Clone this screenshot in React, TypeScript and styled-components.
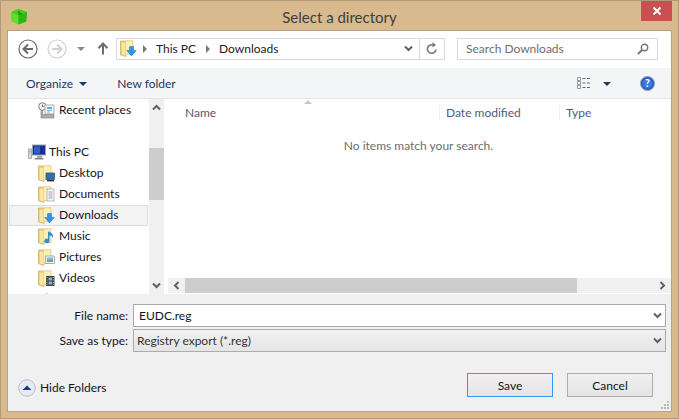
import React from 'react';
import styled, { createGlobalStyle } from 'styled-components';

const GlobalStyle = createGlobalStyle`
  html, body {
    margin: 0;
    padding: 0;
    background: #d9b98e;
  }
  * {
    box-sizing: border-box;
  }
`;

const FONT = `Lato, "Noto Sans", sans-serif`;

type FolderBadge = 'desktop' | 'documents' | 'downloads' | 'music' | 'pictures' | 'videos';

const FolderIcon: React.FC<{ badge: FolderBadge }> = ({ badge }) => (
  <svg width="17" height="17" viewBox="0 0 17 17">
    <path d="M.5 1h4.500l1 1.500V16.500L.5 14.800z" fill="#f0d47c" stroke="#c9a95a" strokeWidth="0.7" />
    <path d="M5.500 .8h7.500V14.500H5.500z" fill="#fbf0b8" stroke="#d8c27a" strokeWidth="0.7" />
    <path d="M2 3h3.500v12.500L2 14.500z" fill="#f7e6a4" />
    {badge === 'desktop' && (
      <>
        <rect x="8" y="8" width="8.500" height="6.500" fill="#2b6fb5" stroke="#3b4a5a" strokeWidth="0.7" />
        <rect x="9" y="15" width="7" height="1.400" fill="#333" />
      </>
    )}
    {badge === 'documents' && (
      <>
        <rect x="9" y="3" width="7" height="12" fill="#f6f7f9" stroke="#9aa3ad" strokeWidth="0.7" />
        <path d="M10.500 6h4M10.500 8h4M10.500 10h4M10.500 12h4" stroke="#8b96a3" strokeWidth="0.8" />
      </>
    )}
    {badge === 'downloads' && (
      <path d="M9.500 6.500h4v4h2.800l-4.800 5.500-4.800-5.500h2.800z" fill="#2f94e4" stroke="#1f79c4" strokeWidth="0.5" />
    )}
    {badge === 'music' && (
      <path d="M11.500 3.500v9.500a2.600 2.300 0 1 1-1.500-2.100V3.500zM11.500 4c2.500 1 4 3 3.500 6-.7-1.700-2-2.600-3.500-2.800z" fill="#2a8fd0" />
    )}
    {badge === 'pictures' && (
      <>
        <rect x="7.500" y="7" width="9" height="7.500" fill="#eef2f3" stroke="#8d979c" strokeWidth="0.7" />
        <rect x="9" y="8.500" width="6" height="2.500" fill="#7db7df" />
        <rect x="9" y="11" width="6" height="2" fill="#7da36a" />
      </>
    )}
    {badge === 'videos' && (
      <>
        <rect x="8" y="6" width="8.500" height="10" fill="#38414a" />
        <rect x="10.500" y="7.500" width="3.500" height="3" fill="#8fb0c8" />
        <rect x="10.500" y="11.500" width="3.500" height="3" fill="#8fb0c8" />
        <path d="M9 7v1M9 9.500v1M9 12v1M9 14v1M15.300 7v1M15.300 9.500v1M15.300 12v1M15.300 14v1" stroke="#e5e5e5" strokeWidth="0.9" />
      </>
    )}
  </svg>
);

const RecentIcon = () => (
  <svg width="17" height="17" viewBox="0 0 17 17">
    <circle cx="4.500" cy="4.500" r="3.800" fill="#f1f1f1" stroke="#7e7e7e" />
    <path d="M4.500 2.500v2.200h2" stroke="#555" fill="none" strokeWidth="0.8" />
    <rect x="7" y="3" width="9" height="9" fill="#f4f6f7" stroke="#9a9fa3" strokeWidth="0.8" />
    <rect x="9" y="5" width="5" height="2" fill="#5ea9dd" />
    <path d="M9 8.500h5M9 10h3" stroke="#7fb7d8" />
    <path d="M3 8.500h1.500v4H16V16H3z" fill="#a8adae" stroke="#7a7f80" strokeWidth="0.6" />
  </svg>
);

const ComputerIcon = () => (
  <svg width="18" height="17" viewBox="0 0 18 17">
    <rect x="0.500" y="5" width="3" height="9.500" fill="#d4dbd7" stroke="#8b9290" strokeWidth="0.7" />
    <rect x="1.300" y="7" width="1.400" height="1.400" fill="#65c04c" />
    <rect x="4.500" y="1" width="13" height="10" fill="#1b2f8f" stroke="#9aa1a8" />
    <rect x="6" y="2.500" width="6" height="7" fill="#2d5fd0" />
    <path d="M9.500 11.500h4l1 2.500h-6z" fill="#a3a9ae" />
    <rect x="6.500" y="14" width="9" height="1.500" fill="#848a8f" />
  </svg>
);

const NavCircle: React.FC<{ $off?: boolean; direction: 'left' | 'right' }> = ({ $off, direction }) => {
  const color = $off ? '#d0d0d0' : '#6a6a6a';
  return (
    <svg width="20" height="20" viewBox="0 0 20 20">
      <circle cx="10" cy="10" r="9" fill="#fff" stroke={color} strokeWidth="1.200" />
      <path
        d={direction === 'left' ? 'M15 10H6M10 5.500 5.500 10l4.500 4.500' : 'M5 10h9M10 5.500l4.500 4.500-4.500 4.500'}
        fill="none"
        stroke={color}
        strokeWidth="2"
      />
    </svg>
  );
};

const Chevron: React.FC<{ direction: 'up' | 'down' | 'left' | 'right' }> = ({ direction }) => {
  const paths = {
    up: 'M1 6.500 4.500 3 8 6.500',
    down: 'M1 2.500 4.500 6 8 2.500',
    left: 'M6.500 1 3 4.500 6.500 8',
    right: 'M2.500 1 6 4.500 2.500 8',
  };
  return (
    <svg width="9" height="9" viewBox="0 0 9 9">
      <path d={paths[direction]} fill="none" stroke="#606060" strokeWidth="2" />
    </svg>
  );
};

const Caret: React.FC<{ color?: string }> = ({ color = '#1c3a66' }) => (
  <svg width="8" height="4" viewBox="0 0 8 4">
    <path d="M0 0h8L4 4z" fill={color} />
  </svg>
);

const treeItems: { label: string; badge: FolderBadge; selected?: boolean }[] = [
  { label: 'Desktop', badge: 'desktop' },
  { label: 'Documents', badge: 'documents' },
  { label: 'Downloads', badge: 'downloads', selected: true },
  { label: 'Music', badge: 'music' },
  { label: 'Pictures', badge: 'pictures' },
  { label: 'Videos', badge: 'videos' },
];

const App: React.FC = () => (
  <Window>
    <GlobalStyle />
    <TitleBar>
      <AppIcon width="18" height="17" viewBox="0 0 18 17">
        <path d="M1 4 9 .8 17 4l-.8 9.500L8.500 16.500 1.800 13z" fill="#3fce1c" />
        <path d="M1 4l7.500 3.500v9L1.800 13z" fill="#5fe02a" />
        <path d="M8.500 7.500 17 4l-.8 9.500-7.700 3z" fill="#2fb516" />
        <path d="M9 3v3.500l3-1" stroke="#176b0c" strokeWidth="0.9" fill="none" />
      </AppIcon>
      <Title>Select a directory</Title>
      <CloseButton>
        <svg width="10" height="10" viewBox="0 0 10 10">
          <path d="M1.500 1.500l7 7M8.500 1.500l-7 7" stroke="#fff" strokeWidth="2" />
        </svg>
      </CloseButton>
    </TitleBar>

    <Client>
      <NavBar>
        <NavCircle direction="left" />
        <ForwardSlot>
          <NavCircle direction="right" $off />
        </ForwardSlot>
        <HistoryCaret>
          <Caret color="#8a8a8a" />
        </HistoryCaret>
        <UpButton>
          <svg width="12" height="13" viewBox="0 0 12 13">
            <path d="M6 12.500V2M1.500 6.300 6 1.500l4.500 4.800" fill="none" stroke="#6c6c6c" strokeWidth="2" />
          </svg>
        </UpButton>
        <AddressBar>
          <AddressIcon>
            <FolderIcon badge="downloads" />
          </AddressIcon>
          <Crumb />
          <CrumbLabel>This PC</CrumbLabel>
          <Crumb />
          <CrumbLabel>Downloads</CrumbLabel>
          <AddressDrop>
            <Chevron direction="down" />
          </AddressDrop>
          <RefreshButton>
            <svg width="12" height="13" viewBox="0 0 12 13">
              <path d="M10 7.500a4.300 4.300 0 1 1-3-4.600" fill="none" stroke="#777" strokeWidth="1.600" />
              <path d="M6.500 0v5.500L10 3z" fill="#777" />
            </svg>
          </RefreshButton>
        </AddressBar>
        <SearchBox>
          <SearchLabel>Search Downloads</SearchLabel>
          <svg width="12" height="12" viewBox="0 0 12 12">
            <circle cx="7.500" cy="4.500" r="3.200" fill="none" stroke="#777" strokeWidth="1.400" />
            <path d="M5 7 1 11" stroke="#777" strokeWidth="2" />
          </svg>
        </SearchBox>
      </NavBar>

      <Toolbar>
        <ToolText>Organize</ToolText>
        <OrganizeCaret>
          <Caret />
        </OrganizeCaret>
        <ToolText>New folder</ToolText>
        <ToolSpacer />
        <svg width="16" height="12" viewBox="0 0 16 12">
          <path d="M.5.500h3v3h-3zM.5 4.500h3v3h-3zM.5 8.500h3v3h-3z" fill="#fff" stroke="#76808c" strokeWidth="0.8" />
          <path d="M5.500 1.500h3M10 1.500h3M5.500 6h3M10 6h3M5.500 10.500h3M10 10.500h3" stroke="#5f6a78" />
        </svg>
        <ViewCaret>
          <Caret />
        </ViewCaret>
        <svg width="15" height="15" viewBox="0 0 15 15">
          <circle cx="7.500" cy="7.500" r="7" fill="#2a5cc0" stroke="#8f9fbf" />
          <circle cx="7.500" cy="7.500" r="5" fill="#3b78dc" />
          <text x="7.500" y="11.300" textAnchor="middle" fontSize="10.500" fontWeight="700" fill="#fff" fontFamily={FONT}>
            ?
          </text>
        </svg>
      </Toolbar>

      <Main>
        <Sidebar>
          <Tree>
            <TreeRow $indent={29}>
              <RecentIcon />
              <TreeLabel>Recent places</TreeLabel>
            </TreeRow>
            <TreeGap />
            <TreeRow $indent={19}>
              <ComputerIcon />
              <TreeRootLabel>This PC</TreeRootLabel>
            </TreeRow>
            {treeItems.map((item) => (
              <TreeRow key={item.label} $indent={29} $selected={item.selected}>
                <FolderIcon badge={item.badge} />
                <TreeLabel>{item.label}</TreeLabel>
              </TreeRow>
            ))}
            <TreeRow $indent={30}>
              <svg width="17" height="17" viewBox="0 0 17 17">
                <path d="M1 3.500 4 3v3H1zM5 3l4-.6V6H5zM1 7h3v3H1zM5 7h4v3.600L5 10z" fill="#19b4ea" />
              </svg>
            </TreeRow>
          </Tree>
          <VScroll>
            <ScrollButton>
              <Chevron direction="up" />
            </ScrollButton>
            <VThumb />
            <VTrack />
            <ScrollButton>
              <Chevron direction="down" />
            </ScrollButton>
          </VScroll>
        </Sidebar>

        <ListPane>
          <ColumnHeader>
            <SortMark />
            <NameColumn>Name</NameColumn>
            <DateColumn>Date modified</DateColumn>
            <TypeColumn>Type</TypeColumn>
          </ColumnHeader>
          <EmptyMessage>No items match your search.</EmptyMessage>
          <HScroll>
            <HButton>
              <Chevron direction="left" />
            </HButton>
            <HThumb />
            <HTrack />
            <HButton>
              <Chevron direction="right" />
            </HButton>
          </HScroll>
        </ListPane>
      </Main>

      <Footer>
        <Form>
          <FieldLabel>File name:</FieldLabel>
          <FileInput>
            <span>EUDC.reg</span>
            <Chevron direction="down" />
          </FileInput>
          <FieldLabel>Save as type:</FieldLabel>
          <TypeSelect>
            <span>Registry export (*.reg)</span>
            <Chevron direction="down" />
          </TypeSelect>
        </Form>
        <Actions>
          <HideFolders>
            <svg width="18" height="18" viewBox="0 0 18 18">
              <circle cx="9" cy="9" r="8.300" fill="#e6ebf3" stroke="#b5bfcc" />
              <path d="M4.500 11 9 6.500l4.500 4.500z" fill="#1d3d75" />
            </svg>
            <span>Hide Folders</span>
          </HideFolders>
          <ActionSpacer />
          <DialogButton $primary>Save</DialogButton>
          <DialogButton>Cancel</DialogButton>
        </Actions>
        <Grip width="10" height="10" viewBox="0 0 10 10">
          <path d="M7 1h2v2H7zM4 4h2v2H4zM7 4h2v2H7zM1 7h2v2H1zM4 7h2v2H4zM7 7h2v2H7z" fill="#b9b9b9" />
        </Grip>
      </Footer>
    </Client>
  </Window>
);

const Window = styled.div`
  position: relative;
  width: 679px;
  height: 419px;
  display: flex;
  flex-direction: column;
  overflow: hidden;
  background: #d9b98e;
  border: 1px solid #b09a7c;
  font-family: ${FONT};
  font-size: 12px;
  color: #1a1a1a;
`;

const TitleBar = styled.div`
  height: 30px;
  flex: none;
  display: flex;
  align-items: center;
  justify-content: center;
`;

const AppIcon = styled.svg`
  position: absolute;
  left: 9px;
  top: 7px;
`;

const Title = styled.div`
  font-size: 15px;
  color: #3f3f3f;
  margin-top: 1px;
`;

const CloseButton = styled.div`
  position: absolute;
  top: 0;
  right: 6px;
  width: 31px;
  height: 20px;
  display: flex;
  align-items: center;
  justify-content: center;
  background: #c75050;
`;

const Client = styled.div`
  position: relative;
  flex: 1;
  margin: 0 7px 7px 7px;
  display: flex;
  flex-direction: column;
  background: #f0f0f0;
  outline: 1px solid #b8a283;
`;

const NavBar = styled.div`
  height: 37px;
  flex: none;
  display: flex;
  align-items: center;
  padding: 0 13px 2px 10px;
  background: #fff;
`;

const ForwardSlot = styled.div`
  display: flex;
  margin-left: 9px;
`;

const HistoryCaret = styled.div`
  display: flex;
  margin-left: 10px;
`;

const UpButton = styled.div`
  display: flex;
  margin-left: 12px;
`;

const AddressBar = styled.div`
  width: 329px;
  height: 22px;
  display: flex;
  align-items: center;
  border: 1px solid #d9d9d9;
  padding-left: 3px;
  margin-left: 7px;
`;

const AddressIcon = styled.div`
  display: flex;
  margin-right: 6px;
`;

const Crumb = styled.div`
  width: 0;
  height: 0;
  border-left: 4px solid #777;
  border-top: 4px solid transparent;
  border-bottom: 4px solid transparent;
  margin-right: 9px;
`;

const CrumbLabel = styled.span`
  margin-right: 10px;
  color: #222;
`;

const AddressDrop = styled.div`
  display: flex;
  margin-left: auto;
  padding: 0 6px;
`;

const RefreshButton = styled.div`
  width: 25px;
  height: 100%;
  display: flex;
  align-items: center;
  justify-content: center;
  border-left: 1px solid #d9d9d9;
`;

const SearchBox = styled.div`
  width: 201px;
  height: 22px;
  margin-left: 12px;
  display: flex;
  align-items: center;
  justify-content: space-between;
  border: 1px solid #d9d9d9;
  padding: 0 8px;
`;

const SearchLabel = styled.span`
  color: #6d6d6d;
`;

const Toolbar = styled.div`
  height: 31px;
  flex: none;
  display: flex;
  align-items: center;
  padding: 0 16px 0 18px;
  background: #f3f5f7;
  border-bottom: 1px solid #e5e5e5;
`;

const ToolText = styled.span`
  color: #1e395b;
`;

const OrganizeCaret = styled.div`
  display: flex;
  margin: 1px 30px 0 6px;
`;

const ToolSpacer = styled.div`
  flex: 1;
`;

const ViewCaret = styled.div`
  display: flex;
  margin: 1px 29px 0 10px;
`;

const Main = styled.div`
  height: 195px;
  flex: none;
  display: flex;
  background: #fff;
`;

const Sidebar = styled.div`
  width: 156px;
  flex: none;
  display: flex;
  background: #fff;
`;

const Tree = styled.div`
  width: 141px;
  height: 195px;
  overflow: hidden;
  padding-top: 1px;
`;

const TreeRow = styled.div<{ $indent: number; $selected?: boolean }>`
  height: 21px;
  display: flex;
  align-items: center;
  padding-left: ${(p) => p.$indent}px;
  margin: 0 1px 0 1px;
  background: ${(p) => (p.$selected ? '#f3f3f3' : 'transparent')};
  outline: ${(p) => (p.$selected ? '1px solid #dcdcdc' : 'none')};
  outline-offset: -1px;
`;

const TreeGap = styled.div`
  height: 21px;
`;

const TreeLabel = styled.span`
  margin: 0 0 2px 4px;
  color: #14141e;
`;

const TreeRootLabel = styled.span`
  margin: 0 0 2px 3px;
  color: #14141e;
`;

const VScroll = styled.div`
  width: 15px;
  display: flex;
  flex-direction: column;
  background: #f0f0f0;
`;

const ScrollButton = styled.div`
  height: 17px;
  flex: none;
  display: flex;
  align-items: center;
  justify-content: center;
`;

const VThumb = styled.div`
  height: 52px;
  margin-top: 32px;
  flex: none;
  background: #cdcdcd;
`;

const VTrack = styled.div`
  flex: 1;
`;

const ListPane = styled.div`
  position: relative;
  flex: 1;
  min-width: 0;
  margin-left: 2px;
  display: flex;
  flex-direction: column;
  background: #fff;
`;

const ColumnHeader = styled.div`
  position: relative;
  height: 21px;
  flex: none;
  display: flex;
  align-items: center;
  padding-top: 5px;
  color: #4c607a;
`;

const SortMark = styled.div`
  position: absolute;
  left: 138px;
  top: 1px;
  width: 0;
  height: 0;
  border-left: 4px solid transparent;
  border-right: 4px solid transparent;
  border-bottom: 4px solid #b6cde0;
`;

const NameColumn = styled.div`
  width: 273px;
  padding-left: 19px;
`;

const DateColumn = styled.div`
  width: 120px;
  padding-left: 6px;
  border-left: 1px solid #eef0f3;
`;

const TypeColumn = styled.div`
  padding-left: 6px;
  border-left: 1px solid #eef0f3;
`;

const EmptyMessage = styled.div`
  flex: 1;
  text-align: center;
  padding-top: 18px;
  color: #6d6d6d;
`;

const HScroll = styled.div`
  height: 15px;
  flex: none;
  margin: 0 0 1px 2px;
  display: flex;
  background: #f0f0f0;
`;

const HButton = styled.div`
  width: 17px;
  flex: none;
  display: flex;
  align-items: center;
  justify-content: center;
`;

const HThumb = styled.div`
  width: 392px;
  flex: none;
  background: #cdcdcd;
`;

const HTrack = styled.div`
  flex: 1;
`;

const Footer = styled.div`
  position: relative;
  flex: 1;
  display: flex;
  flex-direction: column;
  background: #f0f0f0;
`;

const Form = styled.div`
  display: grid;
  grid-template-columns: 120px 533px;
  grid-auto-rows: 23px;
  row-gap: 2px;
  column-gap: 5px;
  align-items: center;
  margin-top: 10px;
`;

const FieldLabel = styled.div`
  text-align: right;
  color: #14141e;
`;

const FileInput = styled.div`
  height: 23px;
  display: flex;
  align-items: center;
  justify-content: space-between;
  padding: 0 3px 0 5px;
  background: #fff;
  border: 1px solid #a9a9b0;
  color: #14141e;
`;

const TypeSelect = styled(FileInput)`
  padding-left: 3px;
  background: linear-gradient(#f1f1f1, #e5e5e5);
  border-color: #acacac;
  color: #333;
`;

const Actions = styled.div`
  display: flex;
  align-items: center;
  margin-top: 21px;
  padding: 0 18px 0 10px;
`;

const HideFolders = styled.div`
  display: flex;
  align-items: center;
  gap: 4px;
  color: #14141e;
  margin-top: 5px;
`;

const ActionSpacer = styled.div`
  flex: 1;
`;

const DialogButton = styled.div<{ $primary?: boolean }>`
  width: 86px;
  height: 24px;
  margin-left: 14px;
  display: flex;
  align-items: center;
  justify-content: center;
  background: linear-gradient(#f0f0f0, #e5e5e5);
  border: 1px solid ${(p) => (p.$primary ? '#3399ff' : '#acacac')};
  color: #14141e;
`;

const Grip = styled.svg`
  position: absolute;
  right: 1px;
  bottom: 1px;
`;

export default App;
